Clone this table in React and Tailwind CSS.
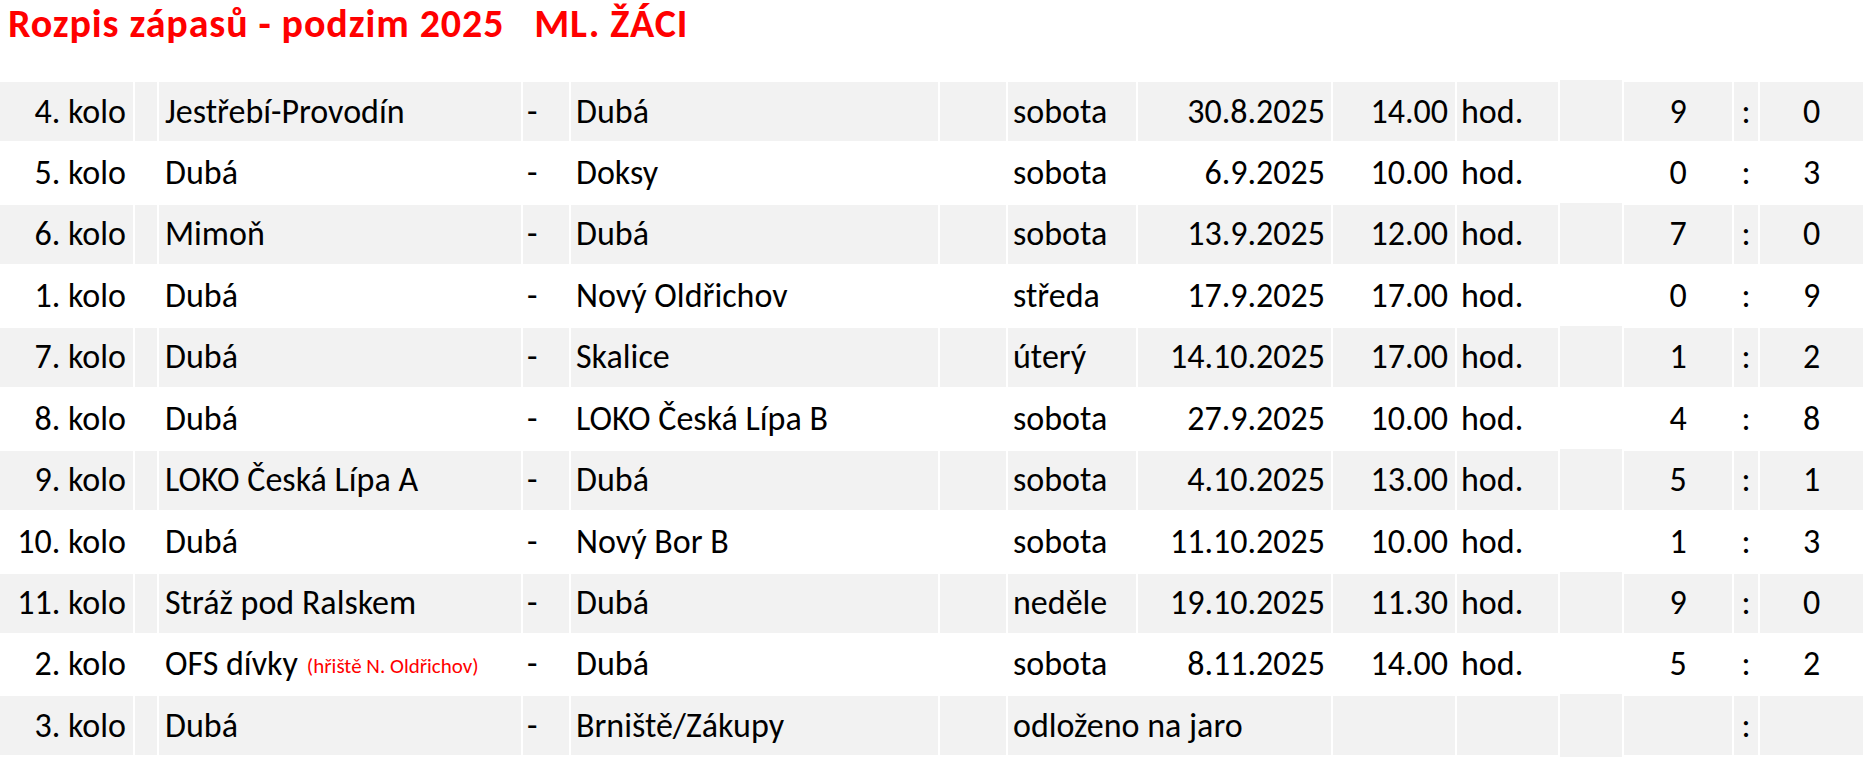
import React from "react";

const rows = [
  { round: "4. kolo", home: "Jestřebí-Provodín", away: "Dubá", day: "sobota", date: "30.8.2025", time: "14.00", h: "9", a: "0" },
  { round: "5. kolo", home: "Dubá", away: "Doksy", day: "sobota", date: "6.9.2025", time: "10.00", h: "0", a: "3" },
  { round: "6. kolo", home: "Mimoň", away: "Dubá", day: "sobota", date: "13.9.2025", time: "12.00", h: "7", a: "0" },
  { round: "1. kolo", home: "Dubá", away: "Nový Oldřichov", day: "středa", date: "17.9.2025", time: "17.00", h: "0", a: "9" },
  { round: "7. kolo", home: "Dubá", away: "Skalice", day: "úterý", date: "14.10.2025", time: "17.00", h: "1", a: "2" },
  { round: "8. kolo", home: "Dubá", away: "LOKO Česká Lípa B", day: "sobota", date: "27.9.2025", time: "10.00", h: "4", a: "8" },
  { round: "9. kolo", home: "LOKO Česká Lípa A", away: "Dubá", day: "sobota", date: "4.10.2025", time: "13.00", h: "5", a: "1" },
  { round: "10. kolo", home: "Dubá", away: "Nový Bor B", day: "sobota", date: "11.10.2025", time: "10.00", h: "1", a: "3" },
  { round: "11. kolo", home: "Stráž pod Ralskem", away: "Dubá", day: "neděle", date: "19.10.2025", time: "11.30", h: "9", a: "0" },
  { round: "2. kolo", home: "OFS dívky", note: "(hřiště N. Oldřichov)", away: "Dubá", day: "sobota", date: "8.11.2025", time: "14.00", h: "5", a: "2" },
  { round: "3. kolo", home: "Dubá", away: "Brniště/Zákupy", postponed: "odloženo na jaro", h: "", a: "" },
];

const Cell = ({ bg, className = "", children }) => (
  <div className={`flex items-center whitespace-nowrap ${bg} ${className}`}>{children}</div>
);

const MatchRow = ({ m, gray }) => {
  const bg = gray ? "bg-[#f2f2f2]" : "bg-white";
  return (
    <div className="h-[61.45px]">
      <div className="grid h-[59px] grid-rows-[59px] gap-x-[2px] grid-cols-[133px_22px_362px_46px_367px_66px_128px_193px_122px_101px_62px_108px_24px_103px]">
        <Cell bg={bg} className="justify-end pr-[7px]">{m.round}</Cell>
        <Cell bg={bg} />
        <Cell bg={bg} className="pl-[6px]">
          {m.home}
          {m.note && <span className="ml-[9px] mt-[4px] text-[21px] text-[#ff0000]">{m.note}</span>}
        </Cell>
        <Cell bg={bg} className="pl-[4px]">-</Cell>
        <Cell bg={bg} className="pl-[5px]">{m.away}</Cell>
        <Cell bg={bg} />
        {m.postponed ? (
          <Cell bg={bg} className="col-span-2 pl-[5px]">{m.postponed}</Cell>
        ) : (
          <>
            <Cell bg={bg} className="pl-[5px]">{m.day}</Cell>
            <Cell bg={bg} className="justify-end pr-[6px]">{m.date}</Cell>
          </>
        )}
        <Cell bg={bg} className="justify-end pr-[7px]">{m.time}</Cell>
        <Cell bg={bg} className="pl-[4px]">{m.time ? "hod." : ""}</Cell>
        <Cell bg={bg} className="-mt-[2px] h-[63px]" />
        <Cell bg={bg} className="justify-center">{m.h}</Cell>
        <Cell bg={bg} className="justify-center">:</Cell>
        <Cell bg={bg} className="justify-center">{m.a}</Cell>
      </div>
    </div>
  );
};

export default function App() {
  return (
    <div className="w-[1863px] h-[758px] overflow-hidden bg-white text-black font-['Carlito','Lato',sans-serif]">
      <div className="h-[82px] pl-[8px]">
        <h1 className="text-[40px] font-bold leading-[48px] tracking-[0.9px] text-[#ff0000] whitespace-pre">
          {"Rozpis zápasů - podzim 2025   ML. ŽÁCI"}
        </h1>
      </div>
      <div className="text-[34px] leading-none">
        {rows.map((m, i) => (
          <MatchRow key={i} m={m} gray={i % 2 === 0} />
        ))}
      </div>
    </div>
  );
}
